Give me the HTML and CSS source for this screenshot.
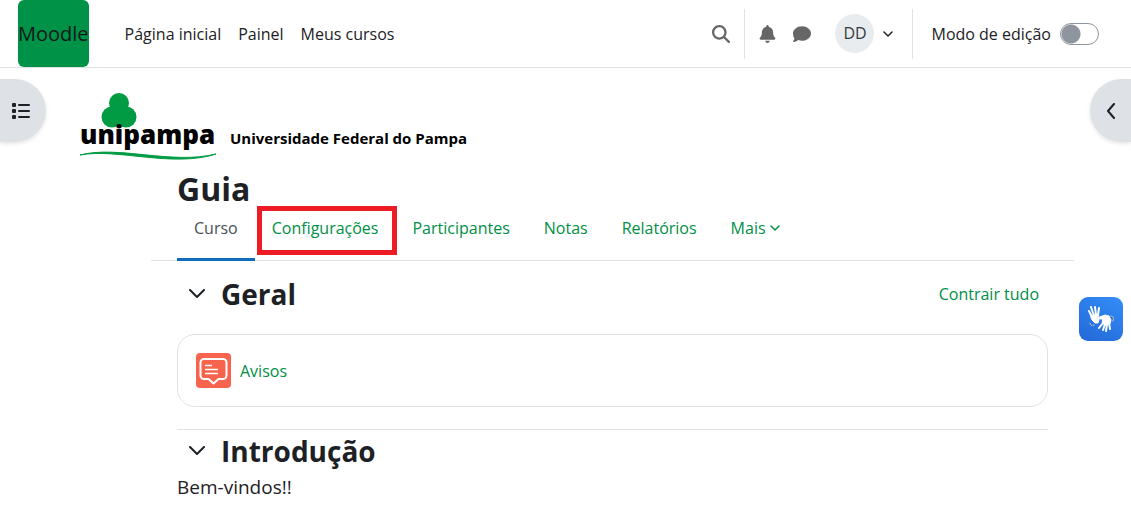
FILE: index.html
```
<!DOCTYPE html>
<html lang="pt-br">
<head>
	<meta charset="UTF-8">
	<meta name="viewport" content="width=device-width, initial-scale=1.0">
	<title>Curso: Guia</title>
	<link rel="stylesheet" href="styles.css">
</head>
<body>

	<header class="navbar">
		<a class="brand" href="#">Moodle</a>
		<nav class="menu">
			<a href="#">Página inicial</a>
			<a href="#">Painel</a>
			<a href="#">Meus cursos</a>
		</nav>
		<div class="tools">
			<button class="icon-btn search" aria-label="Buscar">
				<svg viewBox="0 0 512 512" width="18" height="18"><path d="M416 208c0 45.9-14.9 88.3-40 122.7L502.6 457.4c12.5 12.5 12.5 32.8 0 45.3s-32.8 12.5-45.3 0L330.7 376c-34.4 25.2-76.8 40-122.7 40C93.1 416 0 322.9 0 208S93.1 0 208 0S416 93.1 416 208zM208 352a144 144 0 1 0 0-288 144 144 0 1 0 0 288z"/></svg>
			</button>
			<div class="notices">
				<button class="icon-btn" aria-label="Notificações">
					<svg viewBox="0 0 448 512" width="17" height="18"><path d="M224 0c-17.7 0-32 14.3-32 32V51.2C119 66 64 130.6 64 208v18.8c0 47-17.3 92.4-48.5 127.6l-7.4 8.3c-8.4 9.4-10.4 22.9-5.3 34.4S19.4 416 32 416H416c12.6 0 24-7.4 29.2-18.9s3.1-25-5.3-34.4l-7.4-8.3C401.3 319.2 384 273.9 384 226.8V208c0-77.4-55-142-128-156.8V32c0-17.7-14.3-32-32-32zm45.3 493.3c12-12 18.7-28.3 18.7-45.3H224 160c0 17 6.7 33.3 18.7 45.3s28.3 18.7 45.3 18.7s33.3-6.7 45.3-18.7z"/></svg>
				</button>
				<button class="icon-btn" aria-label="Mensagens">
					<svg viewBox="0 0 512 512" width="18" height="18"><path d="M512 240c0 114.9-114.6 208-256 208c-37.1 0-72.3-6.4-104.1-17.9c-11.9 8.7-31.3 20.6-54.3 30.6C73.6 471.1 44.7 480 16 480c-6.5 0-12.3-3.9-14.8-9.9c-2.5-6-1.1-12.8 3.4-17.4l.3-.3c.7-.7 1.8-1.9 3.3-3.6c2.8-3.1 6.7-7.9 11.1-14.3c8.1-11.7 17.8-29.1 23-51C15.3 346.8 0 296.3 0 240C0 125.1 114.6 32 256 32s256 93.1 256 208z"/></svg>
				</button>
				<button class="user" aria-label="Menu do usuário">
					<span class="avatar">DD</span>
					<svg class="line thin" viewBox="0 0 10 6" width="10" height="6"><path d="M1 1l4 4 4-4"/></svg>
				</button>
			</div>
			<div class="edit-mode">
				<label for="editar">Modo de edição</label>
				<input type="checkbox" id="editar" class="switch">
			</div>
		</div>
	</header>

	<button class="drawer drawer-left" aria-label="Abrir índice do curso">
		<svg viewBox="0 0 18 16" width="18" height="16">
			<rect x="0" y="0" width="4" height="4" rx="1"/><rect x="0" y="6" width="4" height="4" rx="1"/><rect x="0" y="12" width="4" height="4" rx="1"/>
			<rect x="6" y="1" width="12" height="2" rx="1"/><rect x="6" y="7" width="12" height="2" rx="1"/><rect x="6" y="13" width="12" height="2" rx="1"/>
		</svg>
	</button>
	<button class="drawer drawer-right" aria-label="Abrir gaveta de blocos">
		<svg class="line" viewBox="0 0 10 16" width="10" height="16"><path d="M8 1L2 8l6 7"/></svg>
	</button>

	<div class="banner">
		<svg width="400" height="72" viewBox="0 0 400 72" role="img" aria-label="Unipampa">
			<g fill="#009b43">
				<circle cx="39" cy="12" r="10"/>
				<circle cx="32" cy="26" r="10.5"/>
				<circle cx="46" cy="26" r="10.5"/>
			</g>
			<text class="logo-name" x="0" y="53">unipampa</text>
			<text class="logo-full" x="150" y="53">Universidade Federal do Pampa</text>
			<path d="M0 64C38 54 92 74 136 63C92 77 38 57 0 64z" fill="#009b43" stroke="#009b43"/>
		</svg>
	</div>

	<main class="page">
		<h1>Guia</h1>
		<nav class="tabs">
			<a class="tab active" href="#">Curso</a>
			<a class="tab marked" href="#">Configurações</a>
			<a class="tab" href="#">Participantes</a>
			<a class="tab" href="#">Notas</a>
			<a class="tab" href="#">Relatórios</a>
			<a class="tab" href="#">Mais <svg class="line thin" viewBox="0 0 10 6" width="10" height="6"><path d="M1 1l4 4 4-4"/></svg></a>
		</nav>

		<section class="topic">
			<div class="topic-head">
				<button class="toggle" aria-label="Contrair Geral"><svg class="line" viewBox="0 0 16 10" width="16" height="10"><path d="M1 1l7 7 7-7"/></svg></button>
				<h2>Geral</h2>
				<a class="collapse" href="#">Contrair tudo</a>
			</div>
			<div class="activity">
				<svg viewBox="0 0 35 35" width="35" height="35">
					<rect width="35" height="35" rx="4" fill="#f7634d"/>
					<g fill="none" stroke="#fff" stroke-width="2" stroke-linejoin="round">
						<path d="M8 6h19a3.500 3.500 0 0 1 3.500 3.500v13a3.500 3.500 0 0 1-3.500 3.500h-4.500l-5 4.500-5-4.500H8A3.500 3.500 0 0 1 4.500 22.500V9.500A3.500 3.500 0 0 1 8 6z"/>
						<path d="M9 12.500h7M9 16.500h13M9 20.500h13" stroke-width="1.500"/>
					</g>
				</svg>
				<a href="#">Avisos</a>
			</div>
		</section>

		<section class="topic">
			<div class="topic-head">
				<button class="toggle" aria-label="Contrair Introdução"><svg class="line" viewBox="0 0 16 10" width="16" height="10"><path d="M1 1l7 7 7-7"/></svg></button>
				<h2>Introdução</h2>
			</div>
			<p>Bem-vindos!!</p>
		</section>
	</main>

	<!-- VLibras -->
	<button class="vlibras" aria-label="Acessível em Libras">
		<svg viewBox="0 0 44 44" width="44" height="44" fill="none" stroke="#fff" stroke-linecap="round" stroke-linejoin="round">
			<path d="M13 20l-3-6M15 19l-3-9M17 18l-1-8M19 18l1-7" stroke-width="2"/>
			<path d="M12 19l7-2 1 2-3 2 3 2-1 3-3 0-3-3z" fill="#fff"/>
			<path d="M24 26l-4 5M26 27l-2 6M28 27l-1 7M30 26l1 6" stroke-width="2"/>
			<path d="M18 21l8-3 4 1 2 4-1 4-5 1-3-2 1-4-5 0z" fill="#fff"/>
			<path d="M32 19l2 1 0 4M11 26l1 2 3 0" stroke-width="1" stroke-opacity=".7"/>
		</svg>
	</button>

</body>
</html>
```
FILE: styles.css
```
*{
	box-sizing: border-box;
}

body{
	margin: 0;
	position: relative;
	font-family: "Open Sans", "Noto Sans", sans-serif;
	font-size: 16px;
	line-height: 24px;
	color: #1d2125;
	background: #fff;
}

a{
	color: #008f45;
	text-decoration: none;
}

button{
	padding: 0;
	border: 0;
	background: none;
	font: inherit;
	color: inherit;
	cursor: pointer;
}

svg{
	display: block;
	flex: none;
	fill: currentColor;
}

.line{
	fill: none;
	stroke: currentColor;
	stroke-width: 2;
	stroke-linecap: round;
	stroke-linejoin: round;
}

.thin{
	stroke-width: 1.5;
}

/* barra do topo */
.navbar{
	display: flex;
	align-items: center;
	height: 68px;
	padding: 0 32px 0 18px;
	border-bottom: 1px solid #dee2e6;
}

.brand{
	border-radius: 6px;
	background: #009247;
	color: #10181a;
	font-size: 20px;
	line-height: 67px;
}

.menu{
	display: flex;
	gap: 17px;
	margin-left: 36px;
}

.menu a{
	color: #1d2125;
}

.tools{
	display: flex;
	align-items: center;
	margin-left: auto;
}

.icon-btn{
	color: #666;
}

.search{
	margin-right: 14px;
}

.notices{
	display: flex;
	align-items: center;
	gap: 17px;
	height: 50px;
	padding: 0 19px 0 14px;
	border: solid #dee2e6;
	border-width: 0 1px;
}

.user{
	display: flex;
	align-items: center;
	gap: 9px;
	margin-left: 7px;
}

.avatar{
	width: 39px;
	height: 39px;
	border-radius: 50%;
	background: #e9ecef;
	color: #343a40;
	line-height: 39px;
	text-align: center;
}

.edit-mode{
	display: flex;
	align-items: center;
	gap: 9px;
	margin-left: 18px;
}

.switch{
	appearance: none;
	width: 39px;
	height: 22px;
	margin: 0;
	border: 1px solid #8f959e;
	border-radius: 11px;
	background: radial-gradient(circle at 10px 10px, #8f959e 9px, #fff 10px);
}

/* gavetas laterais */
.drawer{
	position: absolute;
	top: 79px;
	display: flex;
	align-items: center;
	height: 63px;
	background: #dee2e6;
	box-shadow: 0 2px 4px rgba(0,0,0,.1);
}

.drawer-left{
	left: 0;
	width: 46px;
	padding-left: 12px;
	border-radius: 0 32px 32px 0;
}

.drawer-right{
	right: 0;
	width: 41px;
	padding-left: 16px;
	border-radius: 32px 0 0 32px;
}

/* logo */
.banner{
	padding: 23px 0 7px 80px;
}

.logo-name{
	font-size: 26px;
	font-weight: 800;
	fill: #000;
}

.logo-full{
	font-size: 15px;
	font-weight: 700;
	fill: #000;
}

/* curso */
.page{
	margin: 0 57px 0 151px;
}

h1{
	margin: 0;
	padding: 0 26px;
	font-size: 32px;
	line-height: 38px;
}

.tabs{
	display: flex;
	padding: 0 26px;
	border-bottom: 1px solid #dee2e6;
}

.tab{
	display: flex;
	align-items: center;
	gap: 4px;
	margin-bottom: -1px;
	padding: 8px 17px 18px;
	border-bottom: 3px solid transparent;
}

.tab.active{
	border-bottom-color: #0f6cbf;
	color: #495057;
}

.tab.marked{
	position: relative;
}

.tab.marked::after{
	content: "";
	position: absolute;
	inset: -2px -2px 3px 2px;
	border: 5px solid #ed1c24;
}

.topic{
	margin: 0 26px;
}

.topic + .topic{
	margin-top: 22px;
	border-top: 1px solid #dee2e6;
}

.topic-head{
	display: flex;
	align-items: center;
	gap: 16px;
	padding: 0 9px 0 12px;
}

.topic:first-of-type .topic-head{
	padding-top: 12px;
	padding-bottom: 19px;
}

h2{
	margin: 0;
	font-size: 28px;
	line-height: 42px;
}

.collapse{
	margin-left: auto;
}

.activity{
	display: flex;
	align-items: center;
	gap: 9px;
	padding: 18px;
	border: 1px solid #dee2e6;
	border-radius: 18px;
}

.topic p{
	margin: 0;
	font-size: 19px;
	line-height: 30px;
}

.vlibras{
	position: fixed;
	top: 297px;
	right: 8px;
	border-radius: 9px;
	background: linear-gradient(30deg, #2368d6, #338df8);
}
```
